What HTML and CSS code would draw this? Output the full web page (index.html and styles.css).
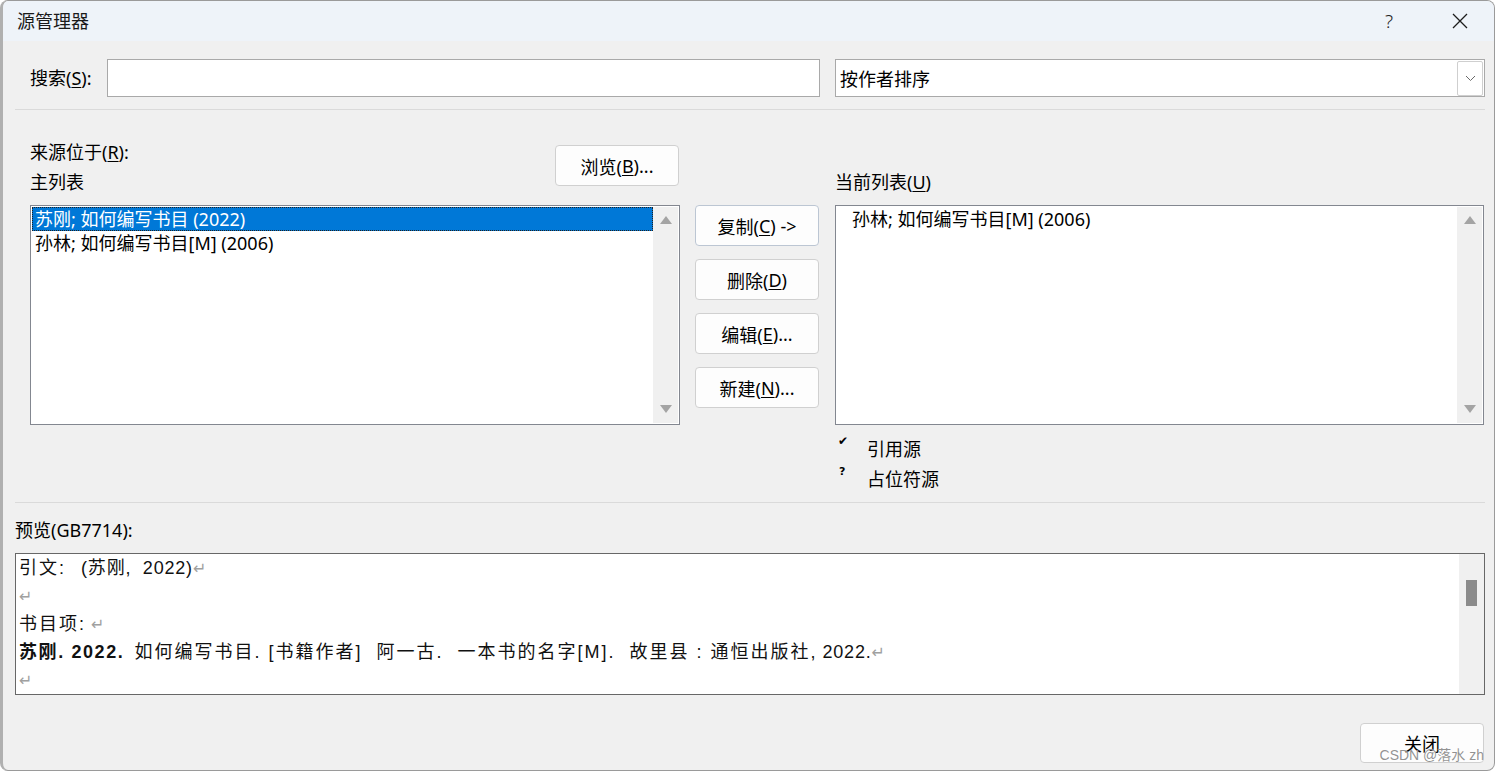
FILE: index.html
```html
<!DOCTYPE html>
<html lang="zh-CN">
<head>
<meta charset="utf-8">
<title>源管理器</title>
<link rel="stylesheet" href="styles.css">
</head>
<body>
<div class="dialog">
  <div class="titlebar">
    <span class="title">源管理器</span>
    <span class="tb-btn help">?</span>
    <span class="tb-btn close">
      <svg width="16" height="16" viewBox="0 0 16 16"><path d="M1 1 L15 15 M15 1 L1 15" stroke="#1c1c1c" stroke-width="1.3" fill="none"/></svg>
    </span>
  </div>

  <div class="content">
    <div class="search-row">
      <label class="search-label">搜索(<u>S</u>):</label>
      <div class="input"></div>
      <div class="combo">
        <span class="combo-text">按作者排序</span>
        <span class="combo-btn">
          <svg width="11" height="7" viewBox="0 0 11 7"><path d="M1 1 L5.5 5.5 L10 1" stroke="#6a6a6a" stroke-width="1" fill="none"/></svg>
        </span>
      </div>
    </div>

    <div class="sep sep-top"></div>

    <div class="lists">
      <div class="left-head">
        <div class="labels">
          <div class="lbl">来源位于(<u>R</u>):</div>
          <div class="lbl">主列表</div>
        </div>
        <button class="btn browse">浏览(<u>B</u>)...</button>
      </div>
      <div class="mid-head"></div>
      <div class="right-head">
        <div class="lbl">当前列表(<u>U</u>)</div>
      </div>

      <div class="listbox">
        <div class="items">
          <div class="item selected">苏刚; 如何编写书目 (2022)</div>
          <div class="item">孙林; 如何编写书目[M] (2006)</div>
        </div>
        <div class="vscroll">
          <svg width="12" height="8" viewBox="0 0 12 8"><polygon points="0,8 6,0 12,8" fill="#a4a4a4"/></svg>
          <svg width="12" height="8" viewBox="0 0 12 8"><polygon points="0,0 12,0 6,8" fill="#a4a4a4"/></svg>
        </div>
      </div>

      <div class="mid-buttons">
        <button class="btn default">复制(<u>C</u>) -&gt;</button>
        <button class="btn">删除(<u>D</u>)</button>
        <button class="btn">编辑(<u>E</u>)...</button>
        <button class="btn">新建(<u>N</u>)...</button>
      </div>

      <div class="listbox right-list">
        <div class="items">
          <div class="item current">孙林; 如何编写书目[M] (2006)</div>
        </div>
        <div class="vscroll">
          <svg width="12" height="8" viewBox="0 0 12 8"><polygon points="0,8 6,0 12,8" fill="#a4a4a4"/></svg>
          <svg width="12" height="8" viewBox="0 0 12 8"><polygon points="0,0 12,0 6,8" fill="#a4a4a4"/></svg>
        </div>
      </div>

      <div class="legend">
        <div class="legend-row"><span class="mark">✔</span><span>引用源</span></div>
        <div class="legend-row"><span class="mark q">?</span><span>占位符源</span></div>
      </div>
    </div>

    <div class="sep sep-mid"></div>

    <div class="preview-label">预览(GB7714):</div>
    <div class="preview">
      <div class="preview-text">
        <div class="pline"><span class="sp">引文:</span>&nbsp;&nbsp;&nbsp;<span class="lt">(苏刚,&nbsp;&nbsp;2022)</span><span class="pm">↵</span></div>
        <div class="pline"><span class="pm">↵</span></div>
        <div class="pline"><span class="sp">书目项:</span> <span class="pm">↵</span></div>
        <div class="pline"><b class="bd">苏刚. 2022.</b>&nbsp; <span class="sp">如何编写书目. [书籍作者]&nbsp; 阿一古.&nbsp; 一本书的名字[M].&nbsp; 故里县 : 通恒出版社,</span> <span class="lt">2022.</span><span class="pm">↵</span></div>
        <div class="pline"><span class="pm">↵</span></div>
      </div>
      <div class="pscroll"><div class="thumb"></div></div>
    </div>

    <div class="footer">
      <button class="btn closebtn">关闭</button>
    </div>
  </div>

  <div class="watermark">CSDN @落水 zh</div>
</div>
</body>
</html>
```

FILE: styles.css
```css
html, body {
  margin: 0;
  padding: 0;
  background: #ffffff;
  width: 1498px;
  height: 773px;
  overflow: hidden;
}

.dialog {
  position: relative;
  width: 1495px;
  height: 771px;
  box-sizing: border-box;
  border: 1px solid #9a9a9a;
  border-left: 3px solid #b0b0b0;
  border-radius: 8px;
  background: #f0f0f0;
  overflow: hidden;
  font-family: "Noto Sans", "Noto Sans CJK SC", sans-serif;
  font-size: 18px;
  color: #000;
}

u { text-decoration: underline; text-underline-offset: 2px; text-decoration-thickness: 1px; }

.titlebar {
  height: 40px;
  background: #eef3f9;
  display: flex;
  align-items: center;
  padding-left: 14px;
  padding-right: 9px;
}
.title {
  font-size: 18px;
  color: #1a1a1a;
  line-height: 40px;
}
.tb-btn {
  width: 46px;
  height: 40px;
  display: flex;
  align-items: center;
  justify-content: center;
}
.help {
  margin-left: auto;
  font-family: "Noto Sans", "Liberation Sans", sans-serif;
  font-size: 19px;
  font-weight: 300;
  color: #222;
  margin-right: 25px;
}
.close { margin-right: 2px; }

.content {
  padding-left: 12px;
  width: 1470px;
}

.search-row {
  margin-top: 18px;
  height: 38px;
  display: flex;
  align-items: center;
  padding-left: 15px;
}
.search-label {
  width: 77px;
  line-height: 38px;
}
.input {
  width: 711px;
  height: 36px;
  border: 1px solid #a9a9a9;
  background: #fff;
}
.combo {
  margin-left: 15px;
  width: 648px;
  height: 36px;
  border: 1px solid #a9a9a9;
  background: #fff;
  display: flex;
  align-items: center;
}
.combo-text {
  padding-left: 4px;
  flex: 1;
}
.combo-btn {
  width: 24px;
  height: 33px;
  margin-right: 1px;
  border: 1px solid #cfcfcf;
  border-radius: 2px;
  display: flex;
  align-items: center;
  justify-content: center;
}

.sep {
  height: 1px;
  background: #dadada;
  width: 1470px;
}
.sep-top { margin-top: 12px; }
.sep-mid { margin-top: 8px; }

.lists {
  padding-top: 27px;
  padding-left: 15px;
  display: grid;
  grid-template-columns: 650px 124px 650px;
  column-gap: 15px;
  grid-template-rows: 60px 220px auto;
  row-gap: 8px;
}
.left-head {
  display: flex;
  justify-content: space-between;
  align-items: flex-start;
}
.lbl {
  line-height: 30px;
}
.right-head {
  display: flex;
  align-items: flex-end;
  margin-left: 1px;
}

.btn {
  font-family: "Noto Sans", "Noto Sans CJK SC", sans-serif;
  font-size: 18px;
  color: #000;
  background: #fdfdfd;
  border: 1px solid #d0d0d0;
  border-radius: 4px;
  width: 124px;
  height: 41px;
  padding: 0;
  display: flex;
  align-items: center;
  justify-content: center;
}
.browse { margin-top: 8px; margin-right: 1px; }
.btn.default { border-color: #bcc6d3; }

.listbox {
  box-sizing: border-box;
  border: 1px solid #838790;
  background: #fff;
  padding: 1px;
  display: flex;
}
.right-list { margin-left: 1px; }
.items {
  flex: 1;
}
.item {
  height: 24px;
  line-height: 24px;
  padding-left: 3px;
  white-space: nowrap;
}
.item.selected {
  background: #0078d7;
  color: #fff;
  outline: 1px dotted #222;
  outline-offset: -1px;
}
.item.current {
  padding-left: 15px;
}
.vscroll {
  width: 25px;
  background: #f0f0f0;
  display: flex;
  flex-direction: column;
  justify-content: space-between;
  align-items: center;
  padding: 9px 0 10px;
  box-sizing: border-box;
}

.mid-buttons {
  display: flex;
  flex-direction: column;
  gap: 13px;
}

.legend {
  grid-column: 3;
  margin-top: 1px;
  margin-left: 4px;
}
.legend-row {
  display: flex;
  height: 30px;
  line-height: 30px;
}
.mark {
  width: 29px;
  font-size: 12px;
  line-height: 12px;
  font-weight: bold;
  padding-top: 1px;
  font-family: "DejaVu Sans", sans-serif;
}
.mark.q {
  font-size: 11px;
  padding-top: 2px;
  padding-left: 1px;
  width: 28px;
}

.preview-label {
  margin-top: 12px;
  line-height: 30px;
}
.preview {
  margin-top: 8px;
  width: 1470px;
  height: 142px;
  box-sizing: border-box;
  border: 1px solid #676767;
  background: #fff;
  display: flex;
}
.preview-text {
  flex: 1;
  padding-left: 3px;
  font-family: "Liberation Sans", "Noto Sans CJK SC", sans-serif;
  font-size: 18px;
  color: #111;
}
.pline {
  height: 28px;
  line-height: 28px;
  white-space: nowrap;
}
.sp { letter-spacing: 2px; }
.lt { letter-spacing: 0.8px; }
.bd { letter-spacing: 1.6px; }
.pm {
  color: #a0a0a0;
  font-family: "DejaVu Sans", sans-serif;
  font-size: 16px;
}
.pscroll {
  width: 25px;
  background: #f0f0f0;
  padding-top: 26px;
  display: flex;
  flex-direction: column;
  align-items: center;
  box-sizing: border-box;
}
.thumb {
  width: 11px;
  height: 26px;
  background: #8b8b8b;
}

.footer {
  margin-top: 28px;
  display: flex;
  justify-content: flex-end;
  padding-right: 1px;
}
.closebtn { height: 40px; }

.watermark {
  position: absolute;
  right: 10px;
  bottom: 6px;
  font-family: "Liberation Sans", "Noto Sans CJK SC", sans-serif;
  font-size: 14px;
  color: rgba(110, 110, 110, 0.75);
  text-shadow: 0 0 1px #fff;
}
```
